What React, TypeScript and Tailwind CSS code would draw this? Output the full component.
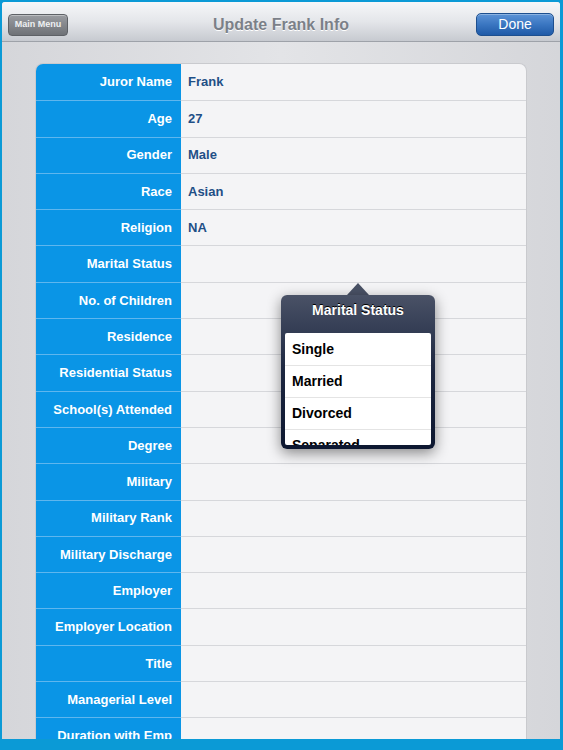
import React from 'react'

const FIELDS: [string, string][] = [
  ['Juror Name', 'Frank'],
  ['Age', '27'],
  ['Gender', 'Male'],
  ['Race', 'Asian'],
  ['Religion', 'NA'],
  ['Marital Status', ''],
  ['No. of Children', ''],
  ['Residence', ''],
  ['Residential Status', ''],
  ['School(s) Attended', ''],
  ['Degree', ''],
  ['Military', ''],
  ['Military Rank', ''],
  ['Military Discharge', ''],
  ['Employer', ''],
  ['Employer Location', ''],
  ['Title', ''],
  ['Managerial Level', ''],
  ['Duration with Emp', ''],
]

const OPTIONS = ['Single', 'Married', 'Divorced', 'Separated']

function NavBar() {
  return (
    <div className="relative h-[40px] shrink-0 flex items-center justify-between pl-[6px] pr-[6px] pt-[6px] bg-gradient-to-b from-[#f6f7f9] via-[#e4e6ea] to-[#c7cad0] border-b border-[#9ea2a9]">
      <button className="h-[22px] w-[60px] rounded-[4px] border border-[#5e6166] bg-gradient-to-b from-[#9a9ca1] to-[#6f7277] text-[9px] font-bold text-[#eef0f2] shadow-[inset_0_1px_0_rgba(255,255,255,0.35)]">
        Main Menu
      </button>
      <div className="absolute inset-x-0 top-[7px] bottom-0 flex items-center justify-center text-[16px] font-bold text-[#7b8088] pointer-events-none [text-shadow:0_1px_0_#fff]">
        Update Frank Info
      </div>
      <button className="h-[23px] w-[78px] rounded-[5px] border border-[#1d4f8f] bg-gradient-to-b from-[#5c93d6] via-[#3a76c1] to-[#1f5aa7] text-[14px] text-white shadow-[inset_0_1px_0_rgba(255,255,255,0.3)]">
        Done
      </button>
    </div>
  )
}

function Popover() {
  return (
    <div className="absolute left-[279px] top-[281px] w-[154px]">
      <div className="ml-[66px] w-0 h-0 border-x-[11px] border-x-transparent border-b-[12px] border-b-[#4a5266]" />
      <div className="rounded-[6px] bg-gradient-to-b from-[#4a5266] via-[#1c2640] to-[#0d1730] px-[4px] pb-[4px] shadow-[0_4px_14px_rgba(0,0,0,0.45)]">
        <div className="h-[38px] flex items-center justify-center pb-[8px] text-[14px] font-bold text-white [text-shadow:0_-1px_0_#000]">
          Marital Status
        </div>
        <div className="h-[112px] overflow-hidden bg-white rounded-[2px] pt-[1px]">
          {OPTIONS.map(o => (
            <div key={o} className="h-[32px] flex items-center pl-[7px] border-b border-[#e4e4e4] text-[14px] font-bold text-black">
              {o}
            </div>
          ))}
        </div>
      </div>
    </div>
  )
}

export default function App() {
  return (
    <div
      className="w-[563px] h-[750px] bg-[#0b9ad6] pt-[2px] pl-[2px] pr-[3px] pb-[11px] overflow-hidden"
      style={{ fontFamily: '"Liberation Sans", Arial, sans-serif' }}
    >
      <div className="relative h-full flex flex-col bg-[#dcdde1] rounded-t-[3px] overflow-hidden">
        <NavBar />
        <div className="flex-1 overflow-hidden bg-gradient-to-r from-[#d5d6da] via-[#e3e4e7] to-[#d5d6da] px-[33px] pt-[21px]">
          <div className="rounded-t-[8px] overflow-hidden border border-[#c9cace] border-b-0">
            {FIELDS.map(([label, value], i) => (
              <div key={label} className="flex h-[36.3px]">
                <div
                  className={`w-[145px] shrink-0 flex items-center justify-end pr-[9px] bg-[#0a95e6] text-[13px] font-bold text-white ${i > 0 ? 'border-t border-[#5fb6ee]' : ''}`}
                >
                  {label}
                </div>
                <div
                  className={`flex-1 flex items-center pl-[7px] bg-[#f4f4f6] text-[13px] font-bold text-[#1f4f86] ${i > 0 ? 'border-t border-[#d6d7db]' : ''}`}
                >
                  {value}
                </div>
              </div>
            ))}
          </div>
        </div>
        <Popover />
      </div>
    </div>
  )
}
